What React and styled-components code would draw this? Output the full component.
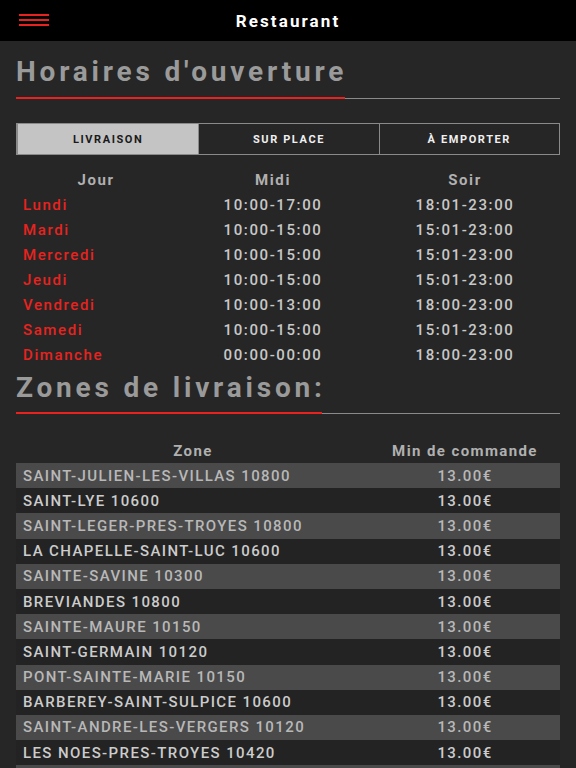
import * as React from "react";
import styled, { createGlobalStyle } from "styled-components";

const GlobalStyle = createGlobalStyle`
  html, body {
    margin: 0;
    padding: 0;
    background: #262626;
    font-family: Roboto, "Liberation Sans", sans-serif;
  }
`;

const RED = "#e8231f";

const hours = [
  ["Lundi", "10:00-17:00", "18:01-23:00"],
  ["Mardi", "10:00-15:00", "15:01-23:00"],
  ["Mercredi", "10:00-15:00", "15:01-23:00"],
  ["Jeudi", "10:00-15:00", "15:01-23:00"],
  ["Vendredi", "10:00-13:00", "18:00-23:00"],
  ["Samedi", "10:00-15:00", "15:01-23:00"],
  ["Dimanche", "00:00-00:00", "18:00-23:00"],
];

// the last entry only peeks in at the bottom edge of the screen
const zones = [
  "SAINT-JULIEN-LES-VILLAS 10800",
  "SAINT-LYE 10600",
  "SAINT-LEGER-PRES-TROYES 10800",
  "LA CHAPELLE-SAINT-LUC 10600",
  "SAINTE-SAVINE 10300",
  "BREVIANDES 10800",
  "SAINTE-MAURE 10150",
  "SAINT-GERMAIN 10120",
  "PONT-SAINTE-MARIE 10150",
  "BARBEREY-SAINT-SULPICE 10600",
  "SAINT-ANDRE-LES-VERGERS 10120",
  "LES NOES-PRES-TROYES 10420",
  "",
];

const tabs = ["LIVRAISON", "SUR PLACE", "À EMPORTER"];

const Page = styled.div`
  height: 768px;
  background: #262626;
  overflow: hidden;
`;

const TopBar = styled.header`
  height: 41px;
  background: #000;
  display: flex;
  align-items: center;
  justify-content: center;
  position: relative;
`;

const Burger = styled.button`
  position: absolute;
  left: 19px;
  top: 14px;
  width: 30px;
  height: 12px;
  padding: 0;
  border: 0;
  background: transparent;
  display: flex;
  flex-direction: column;
  justify-content: space-between;

  span {
    display: block;
    height: 2px;
    background: ${RED};
  }
`;

const Title = styled.h1`
  margin: 0;
  color: #fff;
  font-size: 17px;
  font-weight: 700;
  letter-spacing: 2.1px;
`;

const Content = styled.main`
  padding: 0 16px;
`;

const SectionTitle = styled.h2`
  margin: 0;
  padding-top: ${({ $top }) => $top}px;
  color: #9a9a9a;
  font-size: 28px;
  font-weight: 700;
  letter-spacing: 3.8px;
  line-height: 32px;
  white-space: nowrap;
`;

const Rule = styled.div`
  height: 2px;
  margin-top: ${({ $gap }) => $gap}px;
  position: relative;
  background: linear-gradient(
    to top,
    #8a8a8a 0,
    #8a8a8a 1px,
    transparent 1px
  );

  &:before {
    content: "";
    position: absolute;
    left: 0;
    top: 0;
    width: ${({ $red }) => $red}px;
    height: 2px;
    background: ${RED};
  }
`;

const Tabs = styled.div`
  margin-top: 24px;
  display: grid;
  grid-template-columns: repeat(3, 1fr);
  border: 1px solid #8a8a8a;
  border-left-width: 2px;
  height: 30px;
`;

const Tab = styled.div`
  display: flex;
  align-items: center;
  justify-content: center;
  font-size: 11px;
  font-weight: 700;
  letter-spacing: 1.6px;
  color: ${({ $active }) => ($active ? "#1a1a1a" : "#f0f0f0")};
  background: ${({ $active }) => ($active ? "#c4c4c4" : "transparent")};
  border-left: 1px solid #8a8a8a;

  &:first-child {
    border-left: 0;
  }
`;

const HoursGrid = styled.div`
  margin-top: 12px;
  display: grid;
  grid-template-columns: 160px 194px 1fr;
  grid-auto-rows: 25px;
  align-items: center;
  font-size: 15px;
  font-weight: 500;
  letter-spacing: 1.6px;
`;

const HeadCell = styled.div`
  text-align: center;
  color: #b0b0b0;
  font-weight: 700;
`;

const DayCell = styled.div`
  padding-left: 7px;
  color: ${RED};
`;

const TimeCell = styled.div`
  text-align: center;
  color: #c8c8c8;
`;

const ZoneTable = styled.div`
  margin-top: 24px;
  font-size: 15px;
  font-weight: 500;
  letter-spacing: 1.4px;
`;

const ZoneRow = styled.div`
  display: grid;
  grid-template-columns: 354px 1fr;
  height: 25.2px;
  align-items: center;
  background: ${({ $shade }) => ($shade ? "#4a4a4a" : "#232323")};
  color: ${({ $shade }) => ($shade ? "#b8b8b8" : "#cccccc")};
`;

const ZoneHead = styled(ZoneRow)`
  height: 25px;
  background: transparent;
  color: #b0b0b0;
  font-weight: 700;
`;

const ZoneName = styled.div`
  padding-left: 7px;
  white-space: nowrap;
`;

const Centered = styled.div`
  text-align: center;
  white-space: nowrap;
`;

export default function App() {
  return (
    <Page>
      <GlobalStyle />
      <TopBar>
        <Burger aria-label="menu">
          <span />
          <span />
          <span />
        </Burger>
        <Title>Restaurant</Title>
      </TopBar>
      <Content>
        <SectionTitle $top={15}>Horaires d'ouverture</SectionTitle>
        <Rule $gap={9} $red={329} />
        <Tabs>
          {tabs.map((t, i) => (
            <Tab key={t} $active={i === 0}>
              {t}
            </Tab>
          ))}
        </Tabs>
        <HoursGrid>
          <HeadCell>Jour</HeadCell>
          <HeadCell>Midi</HeadCell>
          <HeadCell>Soir</HeadCell>
          {hours.map(([day, midi, soir]) => (
            <React.Fragment key={day}>
              <DayCell>{day}</DayCell>
              <TimeCell>{midi}</TimeCell>
              <TimeCell>{soir}</TimeCell>
            </React.Fragment>
          ))}
        </HoursGrid>
        <SectionTitle $top={5}>Zones de livraison:</SectionTitle>
        <Rule $gap={8} $red={306} />
        <ZoneTable>
          <ZoneHead>
            <Centered>Zone</Centered>
            <Centered>Min de commande</Centered>
          </ZoneHead>
          {zones.map((z, i) => (
            <ZoneRow key={i} $shade={i % 2 === 0}>
              <ZoneName>{z}</ZoneName>
              <Centered>{z && "13.00€"}</Centered>
            </ZoneRow>
          ))}
        </ZoneTable>
      </Content>
    </Page>
  );
}
